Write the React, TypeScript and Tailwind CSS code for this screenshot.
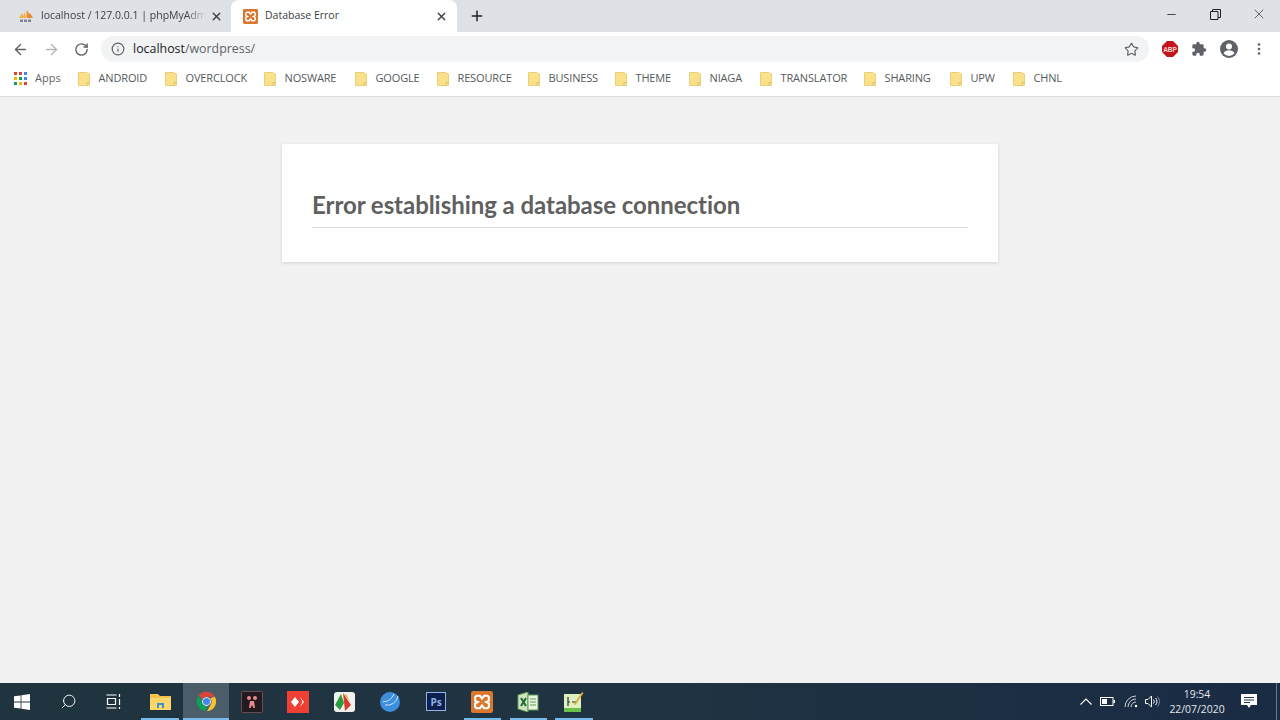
import { ArrowLeft, ArrowRight, Info, Minus, Plus, RotateCw, Search, Star, X } from "lucide-react";
import type { ReactNode } from "react";

const bookmarks = [
  ["ANDROID", "w-[87px]"],
  ["OVERCLOCK", "w-[99px]"],
  ["NOSWARE", "w-[91px]"],
  ["GOOGLE", "w-[82px]"],
  ["RESOURCE", "w-[91px]"],
  ["BUSINESS", "w-[87px]"],
  ["THEME", "w-[74px]"],
  ["NIAGA", "w-[71px]"],
  ["TRANSLATOR", "w-[104px]"],
  ["SHARING", "w-[86px]"],
  ["UPW", "w-[63px]"],
  ["CHNL", "w-[60px]"],
];

function Folder() {
  return (
    <svg width="12" height="14" viewBox="0 0 12 14" className="shrink-0">
      <path d="M.5.5h8l3 1.5v11.5H.5z" fill="#fbe08a" stroke="#e8cf7c" />
      <path d="M9 13.5v-3h2.5" fill="none" stroke="#d9c275" />
    </svg>
  );
}

function XamppIcon({ size }: { size: number }) {
  return (
    <svg width={size} height={size} viewBox="0 0 16 16" className="shrink-0">
      <rect width="16" height="16" rx="1.5" fill="#d9772f" />
      <path
        d="M4 3.5h2.5L8 5.5l1.5-2H12l1 1v2.5L11 8l2 1v2.5l-1 1H9.5l-1.5-2-1.5 2H4l-1-1V9l2-1-2-1V4.500z"
        fill="none"
        stroke="#fff"
        strokeWidth="1.5"
      />
    </svg>
  );
}

function PmaIcon() {
  return (
    <svg width="16" height="14" viewBox="0 0 16 14" className="shrink-0">
      <path d="M1 9l3-5 1 3 2-4v6z" fill="#f2b04c" />
      <path d="M7 9l2-8 2 4 1-1 3 5z" fill="#e98a2e" />
      <path d="M7 9l2-8v8z" fill="#f6c777" />
      <rect x="2" y="10.500" width="3" height="2.500" fill="#7d8494" />
      <rect x="6" y="10.500" width="3" height="2.500" fill="#7d8494" />
      <rect x="10" y="10.500" width="3" height="2.500" fill="#7d8494" />
    </svg>
  );
}

function TaskItem({ active, lit, children }: { active?: boolean; lit?: string; children: ReactNode }) {
  return (
    <div className={`relative flex h-full w-[46px] shrink-0 items-center justify-center ${active ? "bg-[#4a5d68]" : ""}`}>
      {children}
      {lit ? <span className={`absolute bottom-0 h-[2px] bg-[#76b9ed] ${lit}`} /> : null}
    </div>
  );
}

export default function App() {
  return (
    <div className="flex h-[720px] w-[1280px] flex-col overflow-hidden bg-[#f1f1f1] font-['Open_Sans',sans-serif]">
      {/* tab strip */}
      <div className="flex h-8 shrink-0 items-end bg-[#dee1e6]">
        <div className="flex h-8 w-[231px] shrink-0 items-center pl-[18px] pr-[8px]">
          <PmaIcon />
          <span className="ml-[7px] w-[165px] overflow-hidden text-[10.500px] whitespace-nowrap text-[#3c4043] [mask-image:linear-gradient(to_right,black_88%,transparent)]">
            localhost / 127.0.0.1 | phpMyAdmin
          </span>
          <X size={13} strokeWidth={2.5} className="ml-auto text-[#3c4043]" />
        </div>
        <div className="flex h-8 w-[226px] shrink-0 items-center rounded-t-lg bg-white pl-[12px] pr-[9px]">
          <XamppIcon size={15} />
          <span className="ml-[7px] text-[10.500px] text-[#3c4043]">Database Error</span>
          <X size={13} strokeWidth={2.5} className="ml-auto text-[#3c4043]" />
        </div>
        <div className="flex h-8 w-10 items-center justify-center">
          <Plus size={16} strokeWidth={2.2} className="text-[#202124]" />
        </div>
        <div className="ml-auto flex h-8 items-start">
          <div className="flex h-7 w-[46px] items-center justify-center">
            <Minus size={13} strokeWidth={1.5} className="text-[#202124]" />
          </div>
          <div className="flex h-7 w-[43px] items-center justify-center">
            <svg width="11" height="11" viewBox="0 0 11 11" fill="none" stroke="#202124">
              <path d="M.5 2.500h7.500v8H.5zM2.500 2.500V.5h8v8H8" />
            </svg>
          </div>
          <div className="flex h-7 w-[43px] items-center justify-center">
            <X size={16} strokeWidth={1} className="text-[#202124]" />
          </div>
        </div>
      </div>

      {/* toolbar */}
      <div className="flex h-8 shrink-0 items-center bg-white pt-[2px]">
        <div className="flex w-[101px] shrink-0 items-center pl-[12px]">
          <ArrowLeft size={17} strokeWidth={2} className="text-[#5f6368]" />
          <ArrowRight size={17} strokeWidth={2} className="ml-[14px] text-[#b4b6b9]" />
          <RotateCw size={15} strokeWidth={2.2} className="ml-[14px] text-[#5f6368]" />
        </div>
        <div className="flex h-[26px] w-[1048px] shrink-0 items-center rounded-full bg-[#f1f3f4] pl-[10px] pr-[10px]">
          <Info size={14} strokeWidth={2} className="text-[#5f6368]" />
          <span className="ml-[8px] text-[12.400px] text-[#202124]">
            localhost<span className="text-[#5f6368]">/wordpress/</span>
          </span>
          <Star size={15} strokeWidth={1.8} className="ml-auto text-[#5f6368]" />
        </div>
        <div className="ml-[13px] flex items-center">
          <svg width="16" height="16" viewBox="0 0 16 16">
            <path d="M5 0h6l5 5v6l-5 5H5l-5-5V5z" fill="#c4151c" />
            <text x="8" y="10.500" textAnchor="middle" fontSize="6.500" fontWeight="700" fill="#ffd9d9" fontFamily="Liberation Sans">
              ABP
            </text>
          </svg>
          <svg width="16" height="16" viewBox="0 0 24 24" fill="#5f6368" className="ml-[13px]">
            <path d="M20.500 11H19V7a2 2 0 0 0-2-2h-4V3.500a2.500 2.500 0 0 0-5 0V5H4a2 2 0 0 0-2 2v3.800h1.500a2.700 2.700 0 0 1 0 5.400H2V20a2 2 0 0 0 2 2h3.800v-1.500a2.700 2.700 0 0 1 5.400 0V22H17a2 2 0 0 0 2-2v-4h1.500a2.500 2.500 0 0 0 0-5z" />
          </svg>
          <svg width="18" height="18" viewBox="0 0 18 18" className="ml-[13px]">
            <circle cx="9" cy="9" r="9" fill="#5f6368" />
            <circle cx="9" cy="6.500" r="3" fill="#fff" />
            <path d="M3.500 13.200c1.200-2 3.400-2.900 5.500-2.900s4.300.9 5.500 2.900A7 7 0 0 1 9 16a7 7 0 0 1-5.500-2.800z" fill="#fff" />
          </svg>
          <svg width="4" height="12" viewBox="0 0 4 12" fill="#5f6368" className="ml-[19px]">
            <circle cx="2" cy="1.500" r="1.300" />
            <circle cx="2" cy="6" r="1.300" />
            <circle cx="2" cy="10.500" r="1.300" />
          </svg>
        </div>
      </div>

      {/* bookmarks */}
      <div className="flex h-[33px] shrink-0 items-center border-b border-[#dadce0] bg-white pb-[3px] pl-[14px]">
        <div className="flex w-[64px] shrink-0 items-center">
          <svg width="13" height="13" viewBox="0 0 13 13" className="shrink-0">
            <rect x="0" y="0" width="3" height="3" fill="#db4437" />
            <rect x="5" y="0" width="3" height="3" fill="#db4437" />
            <rect x="10" y="0" width="3" height="3" fill="#4285f4" />
            <rect x="0" y="5" width="3" height="3" fill="#f4b400" />
            <rect x="5" y="5" width="3" height="3" fill="#0f9d58" />
            <rect x="10" y="5" width="3" height="3" fill="#4285f4" />
            <rect x="0" y="10" width="3" height="3" fill="#0f9d58" />
            <rect x="5" y="10" width="3" height="3" fill="#f4b400" />
            <rect x="10" y="10" width="3" height="3" fill="#db4437" />
          </svg>
          <span className="ml-[8px] text-[11px] text-[#5f6368]">Apps</span>
        </div>
        {bookmarks.map(([name, width]) => (
          <div key={name} className={`flex shrink-0 items-center ${width}`}>
            <Folder />
            <span className="ml-[8.500px] text-[11px] tracking-[-0.15px] text-[#55595d]">{name}</span>
          </div>
        ))}
      </div>

      {/* page */}
      <main className="flex-1 pt-[47px]">
        <div className="mx-auto h-[118px] w-[716px] bg-white px-[30px] pt-[45px] shadow-[0_1px_3px_rgba(0,0,0,0.13)]">
          <h1 className="border-b border-[#dadada] pb-[6px] font-['Lato',sans-serif] text-[24px] leading-[32px] font-bold tracking-[-0.05px] text-[#606060]">
            Error establishing a database connection
          </h1>
        </div>
      </main>

      {/* taskbar */}
      <div className="flex h-[37px] shrink-0 items-center bg-gradient-to-r from-[#20343f] via-[#1f3342] to-[#1a2b44]">
        <div className="-ml-px flex h-full items-center">
          <TaskItem>
            <svg width="16" height="16" viewBox="0 0 16 16" fill="#fff">
              <path d="M0 2.300l6.600-.9v6.200H0zM7.400 1.300L16 0v7.600H7.400zM0 8.400h6.600v6.200L0 13.700zM7.400 8.400H16V16l-8.600-1.300z" />
            </svg>
          </TaskItem>
          <TaskItem>
            <Search size={17} strokeWidth={1.3} className="-scale-x-100 text-white" />
          </TaskItem>
          <TaskItem>
            <svg width="16" height="15" viewBox="0 0 16 15" fill="none" stroke="#fff" strokeWidth="1.200">
              <path d="M.5 1h10M1.500 4.500h8v6h-8zM.5 14h10M13.500 0v3M13.500 5v6M13.500 13v2" />
            </svg>
          </TaskItem>
          <TaskItem lit="w-[38px]">
            <svg width="21" height="17" viewBox="0 0 21 17">
              <path d="M0 1h8l2 2h11v14H0z" fill="#f2c14e" />
              <rect y="5" width="21" height="12" fill="#fbd66b" />
              <path d="M7 10h7v5H7z" fill="#3f8ed0" />
              <path d="M9 12h3v3H9z" fill="#fbd66b" />
            </svg>
          </TaskItem>
          <TaskItem active lit="w-[46px]">
            <svg width="21" height="21" viewBox="0 0 48 48">
              <path d="M24 2a22 22 0 0 1 19.100 11H24a11 11 0 0 0-10.500 7.700L6.400 9.800A22 22 0 0 1 24 2z" fill="#db4437" />
              <path d="M43.100 13A22 22 0 0 1 25 46l9.600-16.500A11 11 0 0 0 32 16.800z" fill="#fbc02d" />
              <path d="M6.400 9.800l9.500 16.500A11 11 0 0 0 27 34.600L21 45.800A22 22 0 0 1 6.400 9.800z" fill="#0f9d58" />
              <circle cx="24" cy="24" r="10" fill="#fff" />
              <circle cx="24" cy="24" r="8" fill="#4285f4" />
            </svg>
          </TaskItem>
          <TaskItem>
            <div className="flex h-[22px] w-[22px] items-center justify-center rounded-[2px] border border-[#6b4a50] bg-[#231a20]">
              <svg width="14" height="14" viewBox="0 0 14 14" fill="#e98a8a">
                <circle cx="4" cy="3" r="2" />
                <circle cx="10" cy="3" r="2" />
                <path d="M5 6h4l1 7H8.500L7 10l-1.500 3H4z" />
              </svg>
            </div>
          </TaskItem>
          <TaskItem>
            <div className="flex h-[22px] w-[22px] items-center justify-center bg-[#ee4035]">
              <svg width="14" height="10" viewBox="0 0 14 10" fill="#fff">
                <path d="M4 0l4 5-4 5-4-5zM9 0l4 5-4 5 2.500-5z" />
              </svg>
            </div>
          </TaskItem>
          <TaskItem>
            <svg width="21" height="20" viewBox="0 0 21 20">
              <rect width="21" height="20" rx="3" fill="#f1f1ee" />
              <path d="M1 13L7 2l3 9-4 7z" fill="#2e9b3f" />
              <path d="M9 1l8 12-6 6z" fill="#dc3a2c" />
              <path d="M10 2l3 1 2 6z" fill="#e9b23a" />
            </svg>
          </TaskItem>
          <TaskItem>
            <svg width="20" height="20" viewBox="0 0 20 20">
              <circle cx="10" cy="10" r="10" fill="#3d8fdc" />
              <path d="M5 13a11 11 0 0 0 13-9" fill="none" stroke="#cfe6fa" strokeWidth="1" />
              <path d="M3 10a13 13 0 0 0 11-8" fill="none" stroke="#cfe6fa" strokeWidth="1" />
            </svg>
          </TaskItem>
          <TaskItem>
            <div className="flex h-[19px] w-[20px] items-center justify-center border border-[#8fb3e8] bg-[#0f1f4d] text-[10px] leading-none font-bold text-[#8fb3e8]">
              Ps
            </div>
          </TaskItem>
          <TaskItem lit="w-[37px]">
            <XamppIcon size={22} />
          </TaskItem>
          <TaskItem lit="w-[37px]">
            <svg width="22" height="20" viewBox="0 0 22 20">
              <path d="M1 3l10-3v20L1 17z" fill="#cfe6c0" stroke="#5f9a55" />
              <rect x="11" y="3" width="10" height="15" fill="#e8f2e0" stroke="#5f9a55" />
              <path d="M4 6l5 8M9 6l-5 8" stroke="#1e6b34" strokeWidth="2" />
              <path d="M13 7h6M13 10h6M13 13h6" stroke="#5f9a55" />
            </svg>
          </TaskItem>
          <TaskItem lit="w-[38px]">
            <svg width="20" height="21" viewBox="0 0 20 21">
              <rect y="3" width="17" height="18" fill="#dff0c0" />
              <rect y="17" width="17" height="4" fill="#6cc04a" />
              <path d="M4 6v9M4 11h2M8 11h4" stroke="#333" strokeWidth="1.200" />
              <path d="M10 13l8-12 1.500 1-8 12z" fill="#e2a93b" />
            </svg>
          </TaskItem>
        </div>
        <div className="ml-auto flex h-full items-center text-white">
          <svg width="12" height="7" viewBox="0 0 12 7" fill="none" stroke="#fff" strokeWidth="1.200">
            <path d="M.5 6.500L6 1l5.500 5.500" />
          </svg>
          <svg width="15" height="9" viewBox="0 0 15 9" className="ml-[8.500px]">
            <rect x=".5" y=".5" width="12.500" height="8" fill="none" stroke="#fff" />
            <rect x="2" y="2" width="5" height="5" fill="#fff" />
            <rect x="13.500" y="3" width="1.500" height="3" fill="#fff" />
          </svg>
          <svg width="15" height="13" viewBox="0 0 15 13" fill="none" stroke="#c9d0d6" className="ml-[9px]">
            <path d="M1 12a11 11 0 0 1 11-11M4 12a8 8 0 0 1 8-8M7 12a5 5 0 0 1 5-5" />
            <circle cx="12" cy="11" r="1.200" fill="#fff" stroke="none" />
          </svg>
          <svg width="15" height="13" viewBox="0 0 15 13" fill="none" stroke="#fff" className="ml-[6px]">
            <path d="M.5 4.500h2.500L6.500 1v11L3 8.500H.5z" />
            <path d="M8.500 4.500a3 3 0 0 1 0 4M10.500 3a5 5 0 0 1 0 7" />
            <path d="M12.500 1.500a8 8 0 0 1 0 10" stroke="#7f8a96" />
          </svg>
          <div className="ml-[4px] flex w-[66px] flex-col items-center text-[10.400px] leading-[15px] text-[#e6e9ec]">
            <span>19:54</span>
            <span>22/07/2020</span>
          </div>
          <svg width="16" height="15" viewBox="0 0 16 15" className="ml-[11px]">
            <path d="M0 0h16v11h-6l-2 3-2-3H0z" fill="#fff" />
            <path d="M3 3.500h10M3 6h10M3 8.500h6" stroke="#26384a" />
          </svg>
          <div className="ml-[19px] h-full w-[4px] border-l border-[#6b7886]" />
        </div>
      </div>
    </div>
  );
}
